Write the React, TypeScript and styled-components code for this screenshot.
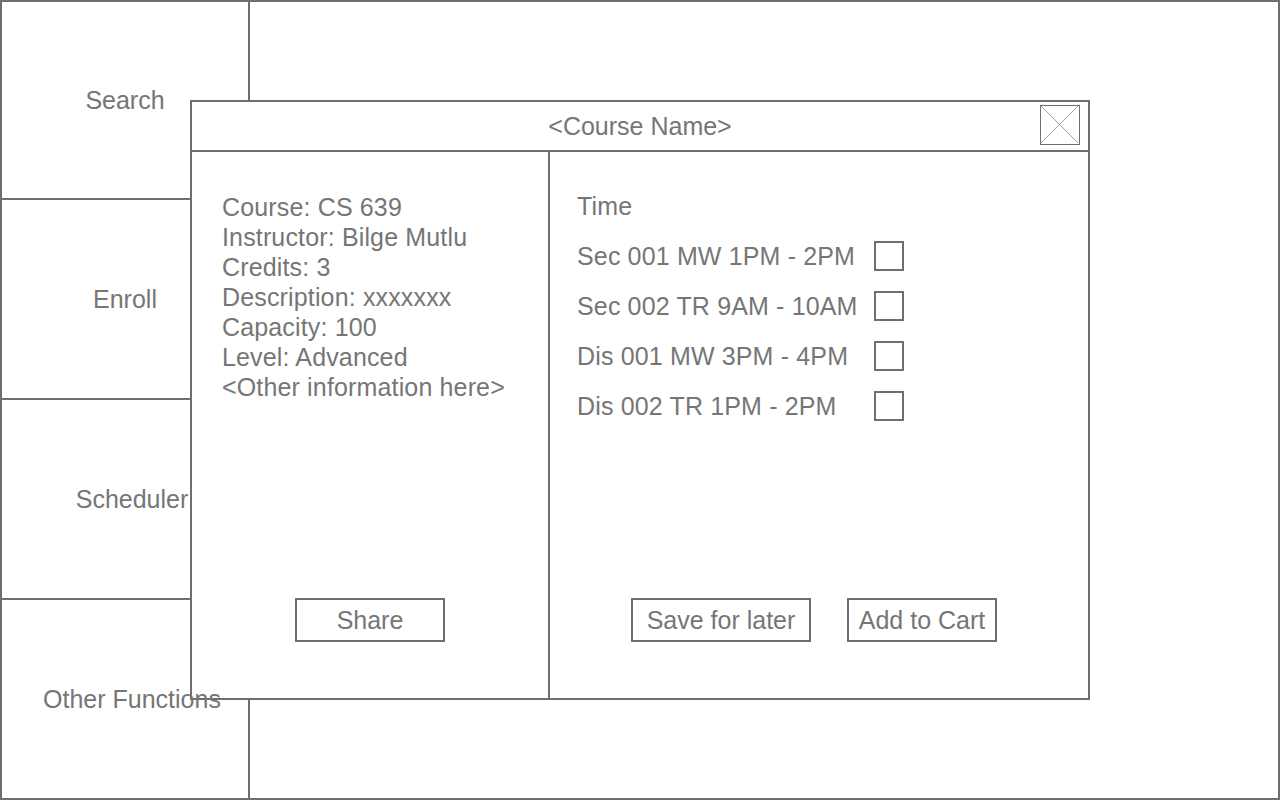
import styled, { createGlobalStyle } from 'styled-components'

const line = '#6f6f6f'
const ink = '#767676'

const GlobalStyle = createGlobalStyle`
    html, body {
        margin: 0;
        padding: 0;
        background: #fff;
    }
    body {
        font-family: "Liberation Sans", Arial, sans-serif;
        color: ${ink};
    }
`

const Frame = styled.div`
    position: relative;
    width: 1280px;
    height: 800px;
    box-sizing: border-box;
    border: 2px solid ${line};
    display: flex;
    background: #fff;
    overflow: hidden;
`
const Sidebar = styled.nav`
    width: 246px;
    border-right: 2px solid ${line};
    display: grid;
    grid-template-rows: 198px 200px 200px 1fr;
`
const NavItem = styled.div`
    display: flex;
    align-items: center;
    justify-content: center;
    border-bottom: 2px solid ${line};
    &:last-child {
        border-bottom: none;
    }
`
const NavLabel = styled.span<{ $shift?: number }>`
    position: relative;
    z-index: 2;
    left: ${(p) => p.$shift ?? 0}px;
    font-size: 25px;
    white-space: nowrap;
`

const Modal = styled.div`
    position: absolute;
    left: 188px;
    top: 98px;
    z-index: 1;
    width: 900px;
    height: 600px;
    box-sizing: border-box;
    border: 2px solid ${line};
    background: #fff;
    display: flex;
    flex-direction: column;
`
const ModalHeader = styled.header`
    position: relative;
    height: 48px;
    border-bottom: 2px solid ${line};
    display: flex;
    align-items: center;
    justify-content: center;
    font-size: 25px;
`
const CloseBox = styled.button`
    position: absolute;
    right: 8px;
    top: 3px;
    width: 40px;
    height: 40px;
    padding: 0;
    box-sizing: border-box;
    border: 1.5px solid ${line};
    background: #fff;
    display: flex;
    cursor: pointer;
`
const ModalBody = styled.div`
    flex: 1;
    display: flex;
`
const InfoColumn = styled.section`
    width: 358px;
    box-sizing: border-box;
    border-right: 2px solid ${line};
    padding: 40px 0 56px 30px;
    display: flex;
    flex-direction: column;
`
const InfoLine = styled.div`
    font-size: 25px;
    letter-spacing: 0.15px;
    line-height: 30px;
    white-space: nowrap;
`
const TimeColumn = styled.section`
    flex: 1;
    padding: 29px 0 56px 27px;
    display: flex;
    flex-direction: column;
`
const TimeGrid = styled.div`
    display: grid;
    grid-template-columns: 297px 30px;
    grid-auto-rows: 50px;
    align-items: center;
    font-size: 25px;
    letter-spacing: 0.15px;
`
const Check = styled.span`
    width: 30px;
    height: 30px;
    box-sizing: border-box;
    border: 2px solid ${line};
    display: block;
`
const ButtonRow = styled.div<{ $indent: number }>`
    margin-top: auto;
    display: flex;
    gap: 36px;
    padding-left: ${(p) => p.$indent}px;
`
const Button = styled.button<{ $width: number }>`
    width: ${(p) => p.$width}px;
    height: 44px;
    box-sizing: border-box;
    border: 2px solid ${line};
    background: #fff;
    color: ${ink};
    font-family: inherit;
    font-size: 25px;
    padding: 0;
    cursor: pointer;
`

const navItems = [
    { label: 'Search' },
    { label: 'Enroll' },
    { label: 'Scheduler', shift: 7 },
    { label: 'Other Functions', shift: 7 },
]

const info = [
    'Course: CS 639',
    'Instructor: Bilge Mutlu',
    'Credits: 3',
    'Description: xxxxxxx',
    'Capacity: 100',
    'Level: Advanced',
    '<Other information here>',
]

const sections = [
    'Sec 001 MW 1PM - 2PM',
    'Sec 002 TR 9AM - 10AM',
    'Dis 001 MW 3PM - 4PM',
    'Dis 002 TR 1PM - 2PM',
]

export default function App() {
    return (
        <>
            <GlobalStyle />
            <Frame>
                <Sidebar>
                    {navItems.map((n) => (
                        <NavItem key={n.label}>
                            <NavLabel $shift={n.shift}>{n.label}</NavLabel>
                        </NavItem>
                    ))}
                </Sidebar>

                <Modal>
                    <ModalHeader>
                        {'<Course Name>'}
                        <CloseBox aria-label="Close">
                            <svg width="37" height="37" viewBox="0 0 37 37">
                                <line x1="0" y1="0" x2="37" y2="37" stroke="#8a8a8a" strokeWidth="0.8" />
                                <line x1="37" y1="0" x2="0" y2="37" stroke="#8a8a8a" strokeWidth="0.8" />
                            </svg>
                        </CloseBox>
                    </ModalHeader>
                    <ModalBody>
                        <InfoColumn>
                            {info.map((t) => (
                                <InfoLine key={t}>{t}</InfoLine>
                            ))}
                            <ButtonRow $indent={73}>
                                <Button $width={150}>Share</Button>
                            </ButtonRow>
                        </InfoColumn>
                        <TimeColumn>
                            <TimeGrid>
                                <span>Time</span>
                                <span />
                                {sections.map((s) => [
                                    <span key={s}>{s}</span>,
                                    <Check key={s + '-c'} />,
                                ])}
                            </TimeGrid>
                            <ButtonRow $indent={54}>
                                <Button $width={180}>Save for later</Button>
                                <Button $width={150}>Add to Cart</Button>
                            </ButtonRow>
                        </TimeColumn>
                    </ModalBody>
                </Modal>
            </Frame>
        </>
    )
}
